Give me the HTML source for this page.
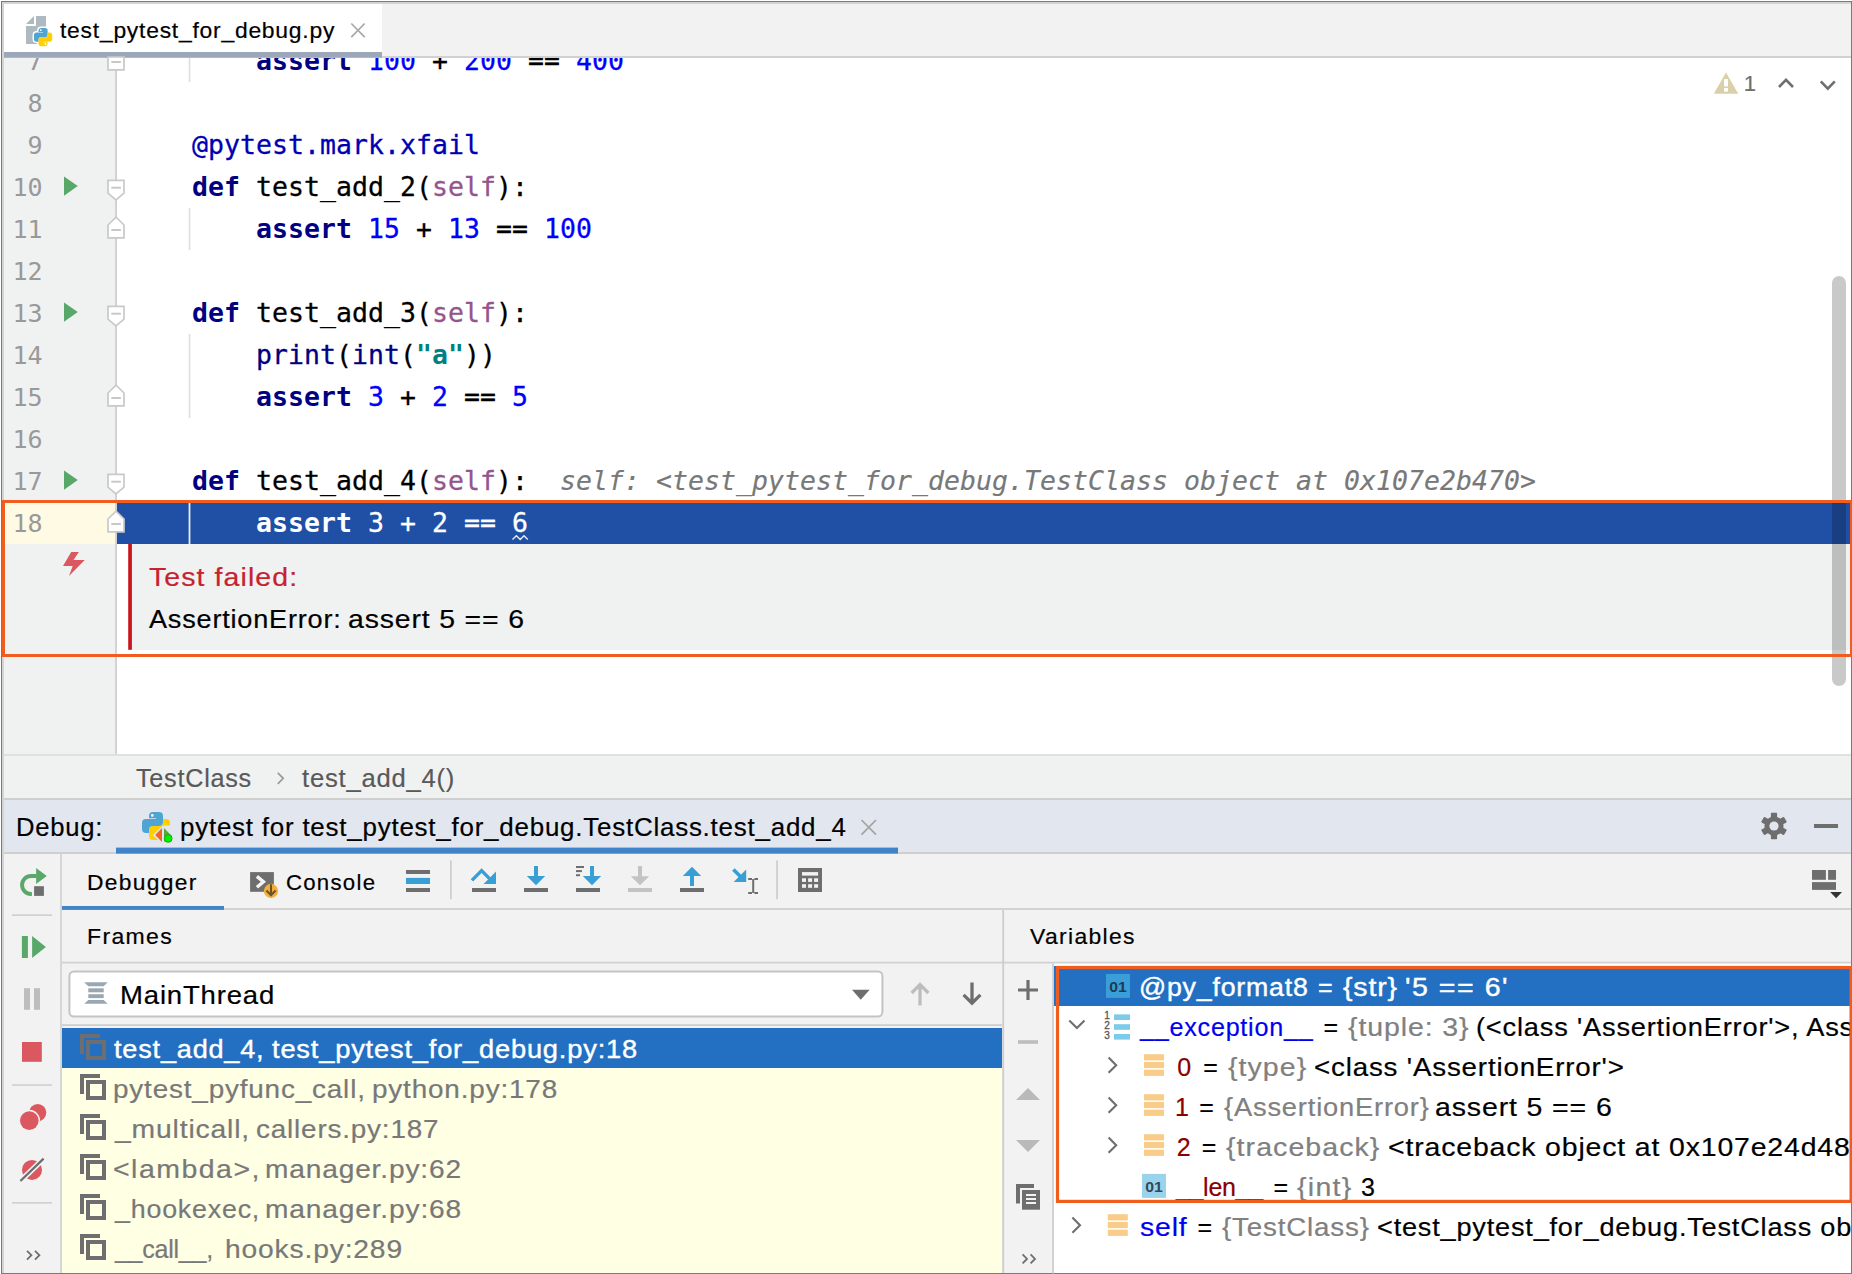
<!DOCTYPE html>
<html lang="en">
<head>
<meta charset="utf-8">
<title>PyCharm – test_pytest_for_debug.py – Debug</title>
<style>
html,body{margin:0;padding:0;background:#fff;width:1852px;height:1274px;overflow:hidden;}
#root{position:absolute;left:0;top:0;width:1852px;height:1274px;overflow:hidden;background:#fff;}
body{width:1852px;height:1274px;position:relative;overflow:hidden;font-family:"Liberation Sans","Liberation Sans",sans-serif;}
.a{position:absolute;}
.t{position:absolute;left:0;white-space:pre;line-height:1;height:1em;font-family:"Liberation Sans","Liberation Sans",sans-serif;-webkit-text-stroke:0.2px currentColor;}
.t span{position:absolute;top:0;transform-origin:0 50%;}
.t.w span{-webkit-text-stroke:0.4px #fff;}
.code{position:absolute;left:192px;white-space:pre;font-family:"DejaVu Sans Mono","Liberation Mono",monospace;font-size:26.5px;letter-spacing:0.046px;line-height:42px;height:42px;color:#000;margin-top:0px;-webkit-text-stroke:0.3px currentColor;}
.ln{position:absolute;left:4px;width:38.5px;text-align:right;white-space:pre;font-family:"DejaVu Sans Mono","Liberation Mono",monospace;font-size:25px;line-height:42px;height:42px;color:#999;margin-top:0.8px;}
.k{color:#000080;font-weight:bold;-webkit-text-stroke:0;}
.n{color:#0000ff;}
.s{color:#94558d;}
.d{color:#0000b2;}
.b{color:#000080;}
.q{color:#008080;font-weight:bold;-webkit-text-stroke:0;}
.h{color:#787878;font-style:italic;-webkit-text-stroke:0.15px currentColor;}
.sel,.sel span{color:#fff !important;}
#svg{position:absolute;left:0;top:0;width:1852px;height:1274px;pointer-events:none;}
</style>
</head>
<body>
<div id="root">
<!-- ================= EDITOR ================= -->
<div id="editor" class="a" style="left:4px;top:58px;width:1847px;height:696px;background:#fff;"></div>
<div id="gutter" class="a" style="left:4px;top:58px;width:112px;height:696px;background:#f0f2f2;"></div>
<!-- current line -->
<div class="a" style="left:4px;top:503px;width:112px;height:41px;background:#fffae3;"></div>
<div class="a" style="left:117px;top:503px;width:1734px;height:41px;background:#2050a6;"></div>
<!-- test failed inlay -->
<div id="inlay" class="a" style="left:130px;top:544px;width:1721px;height:106px;background:#f0f2f2;"></div>

<!-- line numbers -->
<div class="ln" style="top:40px">7</div>
<div class="ln" style="top:82px">8</div>
<div class="ln" style="top:124px">9</div>
<div class="ln" style="top:166px">10</div>
<div class="ln" style="top:208px">11</div>
<div class="ln" style="top:250px">12</div>
<div class="ln" style="top:292px">13</div>
<div class="ln" style="top:334px">14</div>
<div class="ln" style="top:376px">15</div>
<div class="ln" style="top:418px">16</div>
<div class="ln" style="top:460px">17</div>
<div class="ln" style="top:502px">18</div>

<!-- code -->
<div class="code" style="top:40px">    <span class="k">assert</span> <span class="n">100</span> + <span class="n">200</span> == <span class="n">400</span></div>
<div class="code" style="top:124px"><span class="d">@pytest.mark.xfail</span></div>
<div class="code" style="top:166px"><span class="k">def</span> test_add_2(<span class="s">self</span>):</div>
<div class="code" style="top:208px">    <span class="k">assert</span> <span class="n">15</span> + <span class="n">13</span> == <span class="n">100</span></div>
<div class="code" style="top:292px"><span class="k">def</span> test_add_3(<span class="s">self</span>):</div>
<div class="code" style="top:334px">    <span class="b">print</span>(<span class="b">int</span>(<span class="q">"a"</span>))</div>
<div class="code" style="top:376px">    <span class="k">assert</span> <span class="n">3</span> + <span class="n">2</span> == <span class="n">5</span></div>
<div class="code" style="top:460px"><span class="k">def</span> test_add_4(<span class="s">self</span>):  <span class="h">self: &lt;test_pytest_for_debug.TestClass object at 0x107e2b470&gt;</span></div>
<div class="code sel" style="top:502px">    <span class="k">assert</span> <span class="n">3</span> + <span class="n">2</span> == <span class="n">6</span></div>

<!-- ================= EDITOR TAB BAR ================= -->
<div id="tabbar" class="a" style="left:4px;top:4px;width:1847px;height:52px;background:#f2f2f2;border-bottom:2px solid #d1d1d1;"></div>
<div id="tab" class="a" style="left:4px;top:4px;width:378px;height:48px;background:#fff;"></div>

<!-- ================= BREADCRUMBS ================= -->
<div id="crumbs" class="a" style="left:4px;top:754px;width:1847px;height:42px;background:#f0f2f2;border-top:2px solid #e0e0e0;border-bottom:2px solid #cfcfcf;"></div>

<!-- ================= DEBUG TOOL WINDOW ================= -->
<div id="dbghdr" class="a" style="left:4px;top:800px;width:1847px;height:52px;background:#e2e6ee;border-bottom:2px solid #cfcfcf;"></div>
<div id="dbgbody" class="a" style="left:4px;top:854px;width:1847px;height:419px;background:#f2f2f2;"></div>
<!-- toolbar row bottom border -->
<!-- left strip divider -->
<!-- frames / variables headers border -->
<!-- frames / variables divider -->
<!-- thread combo -->
<div id="combo" class="a" style="left:70px;top:972px;width:812px;height:44px;background:#fff;border-radius:3px;"></div>
<!-- frames list -->
<div id="frames" class="a" style="left:62px;top:1028px;width:940px;height:245px;background:#ffffe4;"></div>
<div class="a" style="left:62px;top:1028px;width:940px;height:40px;background:#2370c2;"></div>
<!-- variables -->
<div id="vars" class="a" style="left:1054px;top:963px;width:797px;height:310px;background:#fff;"></div>
<div class="a" style="left:1054px;top:966px;width:797px;height:40px;background:#2370c2;"></div>


<div class="t" style="top:19.74px;font-size:22.4px;"><span style="left:59.8px;letter-spacing:0.75px;transform:scaleX(1.021);color:#000">test_pytest_for_debug.py</span></div>
<div class="t" style="top:565.04px;font-size:25px;"><span style="left:148.5px;letter-spacing:0.95px;transform:scaleX(1.140);color:#c7222d">Test failed:</span></div>
<div class="t" style="top:607.24px;font-size:25px;"><span style="left:148.9px;letter-spacing:0.75px;transform:scaleX(1.082);color:#000">AssertionError: </span><span style="left:347.6px;letter-spacing:0.75px;transform:scaleX(1.136);color:#000">assert 5 == 6</span></div>
<div class="t" style="top:765.54px;font-size:25px;"><span style="left:136.4px;letter-spacing:0.75px;transform:scaleX(1.007);color:#595959">TestClass</span></div>
<div class="t" style="top:765.54px;font-size:25px;"><span style="left:301.6px;letter-spacing:0.75px;transform:scaleX(1.025);color:#595959">test_add_4()</span></div>
<div class="t" style="top:815.44px;font-size:25px;"><span style="left:15.6px;letter-spacing:0.75px;transform:scaleX(1.024);color:#000">Debug:</span></div>
<div class="t" style="top:815.44px;font-size:25px;"><span style="left:179.8px;letter-spacing:0.75px;transform:scaleX(1.037);color:#000">pytest for test_pytest_for_debug.TestClass.test_add_4</span></div>
<div class="t" style="top:871.51px;font-size:22.2px;"><span style="left:87.1px;letter-spacing:1.30px;transform:scaleX(1.026);color:#000">Debugger</span></div>
<div class="t" style="top:871.81px;font-size:22.2px;"><span style="left:285.9px;letter-spacing:1.28px;color:#000">Console</span></div>
<div class="t" style="top:925.61px;font-size:22.2px;"><span style="left:87.4px;letter-spacing:1.30px;transform:scaleX(1.037);color:#000">Frames</span></div>
<div class="t" style="top:925.81px;font-size:22.2px;"><span style="left:1030.2px;letter-spacing:1.30px;transform:scaleX(1.032);color:#000">Variables</span></div>
<div class="t" style="top:983.14px;font-size:25px;"><span style="left:119.7px;letter-spacing:0.75px;transform:scaleX(1.101);color:#000">MainThread</span></div>
<div class="t w" style="top:1036.94px;font-size:25px;"><span style="left:114.1px;letter-spacing:0.75px;transform:scaleX(1.083);color:#fff">test_add_4, </span><span style="left:272.0px;letter-spacing:0.75px;transform:scaleX(1.090);color:#fff">test_pytest_for_debug.py:18</span></div>
<div class="t" style="top:1076.94px;font-size:25px;"><span style="left:112.8px;letter-spacing:0.75px;transform:scaleX(1.114);color:#787878">pytest_pyfunc_call, </span><span style="left:371.9px;letter-spacing:0.75px;transform:scaleX(1.115);color:#787878">python.py:178</span></div>
<div class="t" style="top:1116.94px;font-size:25px;"><span style="left:115.0px;letter-spacing:0.75px;transform:scaleX(1.131);color:#787878">_multicall, </span><span style="left:255.7px;letter-spacing:0.75px;transform:scaleX(1.113);color:#787878">callers.py:187</span></div>
<div class="t" style="top:1156.94px;font-size:25px;"><span style="left:113.1px;letter-spacing:1.29px;transform:scaleX(1.140);color:#787878">&lt;lambda&gt;, </span><span style="left:264.7px;letter-spacing:0.75px;transform:scaleX(1.124);color:#787878">manager.py:62</span></div>
<div class="t" style="top:1196.94px;font-size:25px;"><span style="left:115.0px;letter-spacing:0.75px;transform:scaleX(1.072);color:#787878">_hookexec, </span><span style="left:264.7px;letter-spacing:0.75px;transform:scaleX(1.125);color:#787878">manager.py:68</span></div>
<div class="t" style="top:1236.94px;font-size:25px;"><span style="left:114.9px;letter-spacing:-0.23px;color:#787878">__call__, </span><span style="left:224.6px;letter-spacing:0.75px;transform:scaleX(1.128);color:#787878">hooks.py:289</span></div>
<div class="t w" style="top:974.94px;font-size:25px;"><span style="left:1138.7px;letter-spacing:0.75px;transform:scaleX(1.069);color:#fff">@py_format8 </span><span style="left:1318.1px;letter-spacing:0.00px;color:#fff">= </span><span style="left:1343.1px;letter-spacing:0.75px;transform:scaleX(1.140);color:#fff">{str} </span><span style="left:1404.8px;letter-spacing:1.36px;transform:scaleX(1.140);color:#fff">'5 == 6'</span></div>
<div class="t" style="top:1014.94px;font-size:25px;"><span style="left:1140.3px;letter-spacing:0.75px;transform:scaleX(1.006);color:#0000f0">__exception__ </span><span style="left:1323.5px;letter-spacing:0.00px;color:#000">= </span><span style="left:1348.3px;letter-spacing:0.78px;transform:scaleX(1.140);color:#808080">{tuple: 3} </span><span style="left:1476.2px;letter-spacing:0.75px;transform:scaleX(1.088);color:#000">(&lt;class 'AssertionError'&gt;, AssertionError</span></div>
<div class="t" style="top:1054.94px;font-size:25px;"><span style="left:1177.3px;letter-spacing:0.00px;color:#8b0000">0 </span><span style="left:1203.3px;letter-spacing:0.00px;color:#000">= </span><span style="left:1227.9px;letter-spacing:0.92px;transform:scaleX(1.140);color:#808080">{type} </span><span style="left:1313.6px;letter-spacing:0.75px;transform:scaleX(1.108);color:#000">&lt;class 'AssertionError'&gt;</span></div>
<div class="t" style="top:1094.94px;font-size:25px;"><span style="left:1174.9px;letter-spacing:0.00px;color:#8b0000">1 </span><span style="left:1199.2px;letter-spacing:0.00px;color:#000">= </span><span style="left:1223.5px;letter-spacing:0.75px;transform:scaleX(1.091);color:#808080">{AssertionError} </span><span style="left:1435.3px;letter-spacing:0.76px;transform:scaleX(1.140);color:#000">assert 5 == 6</span></div>
<div class="t" style="top:1134.94px;font-size:25px;"><span style="left:1176.8px;letter-spacing:0.00px;color:#8b0000">2 </span><span style="left:1201.8px;letter-spacing:0.00px;color:#000">= </span><span style="left:1226.2px;letter-spacing:0.94px;transform:scaleX(1.140);color:#808080">{traceback} </span><span style="left:1387.5px;letter-spacing:0.75px;transform:scaleX(1.137);color:#000">&lt;traceback object at 0x107e24d48&gt;</span></div>
<div class="t" style="top:1174.94px;font-size:25px;"><span style="left:1175.9px;letter-spacing:-0.29px;color:#8b0000">__len__ </span><span style="left:1273.6px;letter-spacing:0.00px;color:#000">= </span><span style="left:1297.2px;letter-spacing:1.13px;transform:scaleX(1.140);color:#808080">{int} </span><span style="left:1360.9px;letter-spacing:0.00px;color:#000">3</span></div>
<div class="t" style="top:1214.94px;font-size:25px;"><span style="left:1139.7px;letter-spacing:0.75px;transform:scaleX(1.136);color:#0000f0">self </span><span style="left:1197.6px;letter-spacing:0.00px;color:#000">= </span><span style="left:1221.9px;letter-spacing:0.75px;transform:scaleX(1.108);color:#808080">{TestClass} </span><span style="left:1376.9px;letter-spacing:0.75px;transform:scaleX(1.084);color:#000">&lt;test_pytest_for_debug.TestClass object at 0x107e2b470&gt;</span></div>
<div class="t" style="top:73.4px;font-size:22px;"><span style="left:1743.8px;color:#6e6e6e">1</span></div>

<!-- window frame -->
<div class="a" style="left:1px;top:1px;width:1851px;height:1px;background:#7a7a7a;"></div>
<div class="a" style="left:2px;top:2px;width:1849px;height:2px;background:#d4d4d4;"></div>
<div class="a" style="left:1px;top:1px;width:1.2px;height:1273px;background:#7a7a7a;"></div>
<div class="a" style="left:2.2px;top:2px;width:1.8px;height:1271px;background:#d4d4d4;"></div>
<div class="a" style="left:1850.8px;top:1px;width:1.2px;height:1273px;background:#7a7a7a;"></div>
<div class="a" style="left:1px;top:1272.5px;width:1851px;height:1.5px;background:#7a7a7a;"></div>

<!-- ================= ICONS / LINES ================= -->
<svg id="svg" viewBox="0 0 1852 1274" width="1852" height="1274">
<!-- ===== separator lines (sub-pixel) ===== -->
<g id="lines">
  <rect x="4" y="52" width="378" height="5.6" fill="#9ca8ba"/>
  <rect x="115.2" y="58" width="1.7" height="696" fill="#cdcdcd"/>
  <rect x="128.2" y="544" width="3.7" height="105.8" fill="#c9161d"/>
  <rect x="116" y="847.6" width="782" height="6" fill="#4083c9"/>
  <rect x="62" y="908" width="1789" height="1.9" fill="#d1d1d1"/>
  <rect x="62" y="906" width="162" height="3.9" fill="#4083c9"/>
  <rect x="60.2" y="854" width="1.7" height="419" fill="#d1d1d1"/>
  <rect x="12" y="914.3" width="40" height="1.7" fill="#d1d1d1"/>
  <rect x="12" y="1084.2" width="40" height="1.7" fill="#d1d1d1"/>
  <rect x="12" y="1202" width="40" height="1.7" fill="#d1d1d1"/>
  <rect x="62" y="961.7" width="1789" height="1.8" fill="#d1d1d1"/>
  <rect x="1002.3" y="910" width="1.8" height="363" fill="#cdcdcd"/>
  <rect x="62" y="1024.2" width="940" height="1.8" fill="#cfcfcf"/>
  <rect x="1052.2" y="963.5" width="1.7" height="310" fill="#cdcdcd"/>
  <rect x="69.4" y="971.5" width="813" height="45" rx="4.5" ry="4.5" fill="none" stroke="#c4c4c4" stroke-width="2"/>
</g>
<!-- ===== editor tab: python file icon ===== -->
<g id="ic-pyfile">
  <path d="M34 16 L26 24 H34 Z" fill="#aeb9c0"/>
  <path d="M36 16 H46 V44 H26 V26 H36 Z" fill="#aeb9c0"/>
  <g transform="translate(34,28) scale(0.65)">
    <path d="M7,4 Q7,0 11,0 H17 Q21,0 21,4 V10 Q21,14 17,14 H11 Q7,14 7,18 V21 H4 Q0,21 0,17 V11 Q0,7 4,7 H14 V6.2 H7 Z" fill="#fff" stroke="#fff" stroke-width="4.5" stroke-linejoin="round"/>
    <path transform="rotate(180 14 14)" d="M7,4 Q7,0 11,0 H17 Q21,0 21,4 V10 Q21,14 17,14 H11 Q7,14 7,18 V21 H4 Q0,21 0,17 V11 Q0,7 4,7 H14 V6.2 H7 Z" fill="#fff" stroke="#fff" stroke-width="4.5" stroke-linejoin="round"/>
    <path d="M7,4 Q7,0 11,0 H17 Q21,0 21,4 V10 Q21,14 17,14 H11 Q7,14 7,18 V21 H4 Q0,21 0,17 V11 Q0,7 4,7 H14 V6.2 H7 Z" fill="#4ea5d4"/>
    <path transform="rotate(180 14 14)" d="M7,4 Q7,0 11,0 H17 Q21,0 21,4 V10 Q21,14 17,14 H11 Q7,14 7,18 V21 H4 Q0,21 0,17 V11 Q0,7 4,7 H14 V6.2 H7 Z" fill="#ffcf00"/>
    <circle cx="10.3" cy="3.4" r="1.4" fill="#fff"/>
    <circle cx="17.7" cy="24.6" r="1.4" fill="#fff"/>
  </g>
</g>
<!-- tab close -->
<path d="M351.3 23.5 L364.7 37.2 M364.7 23.5 L351.3 37.2" stroke="#a8a8a8" stroke-width="1.7" fill="none"/>

<!-- ===== inspections widget ===== -->
<g id="ic-warn">
  <path d="M1726 72.4 L1738.2 93.8 H1713.8 Z" fill="#d9cfa8"/>
  <rect x="1724" y="79" width="4" height="7.4" fill="#fff"/>
  <rect x="1724" y="88" width="4" height="3.6" fill="#fff"/>
  <path d="M1779 87 L1786 79.8 L1793 87" stroke="#6e6e6e" stroke-width="2.6" fill="none"/>
  <path d="M1820.8 81.4 L1827.8 88.6 L1834.8 81.4" stroke="#6e6e6e" stroke-width="2.6" fill="none"/>
</g>

<!-- ===== editor scrollbar ===== -->
<rect x="1832" y="276" width="14" height="410" rx="7" ry="7" fill="#000" fill-opacity="0.21"/>

<!-- ===== indent guides ===== -->
<g stroke="#dedede" stroke-width="1.6">
  <path d="M189.5 58 V82"/>
  <path d="M189.5 208 V250"/>
  <path d="M189.5 334 V418"/>
</g>
<path d="M189.5 503 V544" stroke="#e8ecf5" stroke-width="1.8"/>

<!-- ===== gutter: run icons ===== -->
<g fill="#59a869">
  <path d="M64 176.4 V195.8 L77.8 186.1 Z"/>
  <path d="M64 302.4 V321.8 L77.8 312.1 Z"/>
  <path d="M64 470.4 V489.8 L77.8 480.1 Z"/>
</g>
<!-- ===== gutter: fold markers ===== -->
<g fill="#fff" stroke="#c9c9c9" stroke-width="1.7">
  <path d="M108 69.8 H124 V57 H108 Z"/>
  <path d="M108 237.8 H124 V225 L116 217.2 L108 225 Z"/>
  <path d="M108 405.8 H124 V393 L116 385.2 L108 393 Z"/>
  <path d="M108 531.8 H124 V519 L116 511.2 L108 519 Z"/>
  <path d="M108 180.4 H124 V193.2 L116 199.8 L108 193.2 Z"/>
  <path d="M108 306.4 H124 V319.2 L116 325.8 L108 319.2 Z"/>
  <path d="M108 474.4 H124 V487.2 L116 493.8 L108 487.2 Z"/>
</g>
<g stroke="#c6c6c6" stroke-width="1.9">
  <path d="M111.3 62 H120.9"/>
  <path d="M111.3 230 H120.9"/>
  <path d="M111.3 398 H120.9"/>
  <path d="M111.3 524 H120.9"/>
  <path d="M111.3 187.7 H120.9"/>
  <path d="M111.3 313.7 H120.9"/>
  <path d="M111.3 481.7 H120.9"/>
</g>
<!-- lightning -->
<path d="M71.2 552 H78.9 L73.5 560 H84.8 L69 575.9 L72.7 565.9 H63 Z" fill="#db5860"/>
<!-- squiggle under 6 -->
<path d="M512.5 539.6 L516.4 535.8 L520.2 539.6 L524 535.8 L527.8 539.6" stroke="#e9e9e9" stroke-width="1.4" fill="none"/>

<!-- breadcrumb chevron -->
<path d="M277.8 772.8 L283.2 778.3 L277.8 783.8" stroke="#9a9a9a" stroke-width="1.7" fill="none"/>

<!-- ===== debug header: pytest icon ===== -->
<g id="ic-pytest">
  <g transform="translate(142,812)">
    <path transform="rotate(180 14 14)" d="M7,4 Q7,0 11,0 H17 Q21,0 21,4 V10 Q21,14 17,14 H11 Q7,14 7,18 V21 H4 Q0,21 0,17 V11 Q0,7 4,7 H14 V6.2 H7 Z" fill="#ffcf00"/>
    <path d="M7,4 Q7,0 11,0 H17 Q21,0 21,4 V10 Q21,14 17,14 H11 Q7,14 7,18 V21 H4 Q0,21 0,17 V11 Q0,7 4,7 H14 V6.2 H7 Z" fill="#4ea5d4"/>
    <circle cx="10.3" cy="3.4" r="1.3" fill="#fff"/>
  </g>
  <path d="M163 825.5 L152.6 835 L163 844.5 H172 V825.5 Z" fill="#e2e6ee"/>
  <path d="M155.2 835 L162 828 V842 Z" fill="#f26522"/>
  <path d="M164 828 V842 L170.8 835 Z" fill="#59a83a"/>
  <circle cx="168.2" cy="838.4" r="3.9" fill="#00f000" stroke="#1f9a1f" stroke-width="0.9"/>
</g>
<path d="M861.5 820 L876 834.7 M876 820 L861.5 834.7" stroke="#a3a3a3" stroke-width="1.7" fill="none"/>
<!-- gear -->
<g id="ic-gear" transform="translate(1774,826)">
  <g fill="#6e6e6e">
    <rect x="-3.1" y="-13.2" width="6.2" height="26.4" rx="0.8"/>
    <rect x="-3.1" y="-13.2" width="6.2" height="26.4" rx="0.8" transform="rotate(60)"/>
    <rect x="-3.1" y="-13.2" width="6.2" height="26.4" rx="0.8" transform="rotate(120)"/>
    <circle r="9.6"/>
  </g>
  <circle r="4.6" fill="#e2e6ee"/>
</g>
<rect x="1814" y="824" width="24" height="4" fill="#6e6e6e"/>

<!-- ===== debugger toolbar ===== -->
<!-- rerun -->
<g id="ic-rerun">
  <path d="M36.5 876.05 H31 A8.96 8.96 0 0 0 31 893.97 H31.9" fill="none" stroke="#59a869" stroke-width="3.9"/>
  <path d="M36.1 868 V884 L46.8 876.05 Z" fill="#59a869"/>
  <rect x="34.1" y="886.2" width="9.8" height="9.7" fill="#6e6e6e"/>
</g>
<!-- console -->
<g id="ic-console">
  <rect x="250.1" y="872.1" width="23.8" height="19.7" fill="#6e6e6e"/>
  <path d="M256.9 876.4 L263.4 881.8 L256.9 887.2" stroke="#f4f4f4" stroke-width="3.4" fill="none"/>
  <circle cx="271" cy="890.9" r="7.1" fill="#f4af3d"/>
  <path d="M271 884.2 V895 M266.4 890.6 L271 895.2 L275.6 890.6" stroke="#6b5425" stroke-width="2.1" fill="none"/>
</g>
<!-- threads -->
<rect x="406" y="870" width="24" height="4" fill="#6e6e6e"/>
<rect x="406" y="877.9" width="24" height="6.1" fill="#389fd6"/>
<rect x="406" y="888" width="24" height="4" fill="#6e6e6e"/>
<rect x="450" y="860.4" width="1.7" height="38.8" fill="#cdcdcd"/>
<!-- step over -->
<g id="ic-stepover">
  <rect x="472" y="888" width="24" height="4" fill="#6e6e6e"/>
  <path d="M471.9 880.4 L481.6 870.6 L489.5 878.6" stroke="#389fd6" stroke-width="3.4" fill="none"/>
  <path d="M496 871.6 V884 H483.6 Z" fill="#389fd6"/>
</g>
<!-- step into -->
<g id="ic-stepinto">
  <rect x="524" y="888" width="24" height="4" fill="#6e6e6e"/>
  <path d="M534 866 H538 V876 H545.2 L536 885.2 L526.8 876 H534 Z" fill="#389fd6"/>
</g>
<!-- step into my code -->
<g id="ic-stepmy">
  <rect x="576" y="888" width="24" height="4" fill="#6e6e6e"/>
  <path d="M590 866 H594 V876 H601.2 L592 885.2 L582.8 876 H590 Z" fill="#389fd6"/>
  <rect x="576" y="866" width="8" height="2" fill="#6e6e6e"/>
  <rect x="576" y="870.1" width="5.9" height="2" fill="#6e6e6e"/>
  <rect x="576" y="874.2" width="4" height="2" fill="#6e6e6e"/>
</g>
<!-- force step into (disabled) -->
<g id="ic-force" fill="#c3c3c3">
  <rect x="628" y="888" width="24" height="4"/>
  <path d="M638 866 H642 V876.2 H649.2 L640 885.2 L630.8 876.2 H638 Z"/>
</g>
<!-- step out -->
<g id="ic-stepout">
  <rect x="680" y="888" width="24" height="4" fill="#6e6e6e"/>
  <path d="M690 886 H694 V876 H701.2 L692 866.8 L682.8 876 H690 Z" fill="#389fd6"/>
</g>
<!-- run to cursor -->
<g id="ic-runtocursor">
  <path d="M733.4 869.4 L741.4 877.4" stroke="#389fd6" stroke-width="3.6" fill="none"/>
  <path d="M746.2 869.4 V881.9 H733.6 Z" fill="#389fd6"/>
  <path d="M753.2 879 V893 M748.2 878.9 H752 M754.4 878.9 H758 M748.2 893 H752 M754.4 893 H758" stroke="#6e6e6e" stroke-width="2" fill="none"/>
</g>
<rect x="776.2" y="860.4" width="1.7" height="38.8" fill="#cdcdcd"/>
<!-- evaluate (calculator) -->
<g id="ic-calc">
  <rect x="798" y="868" width="24" height="24" fill="#6e6e6e"/>
  <g fill="#f2f2f2">
    <rect x="802" y="872.1" width="16.1" height="3.5"/>
    <rect x="802" y="878.3" width="4" height="3.6"/><rect x="808.1" y="878.3" width="4" height="3.6"/><rect x="814.1" y="878.3" width="4" height="3.6"/>
    <rect x="802" y="884.2" width="4" height="3.6"/><rect x="808.1" y="884.2" width="4" height="3.6"/><rect x="814.1" y="884.2" width="4" height="3.6"/>
  </g>
</g>
<!-- layout -->
<g id="ic-layout">
  <rect x="1812" y="870" width="13.9" height="9.8" fill="#6e6e6e"/>
  <rect x="1828.1" y="870" width="7.9" height="9.8" fill="#6e6e6e"/>
  <rect x="1812" y="882.1" width="24" height="7.8" fill="#6e6e6e"/>
  <path d="M1830.2 892 H1842 L1836.1 898.2 Z" fill="#333"/>
</g>

<!-- ===== left strip ===== -->
<g id="ic-resume" fill="#59a869">
  <rect x="21.9" y="936" width="6" height="22"/>
  <path d="M32.1 936 V958 L45.9 947 Z"/>
</g>
<g id="ic-pause" fill="#bdbdbd">
  <rect x="24" y="988.2" width="6" height="21.6"/>
  <rect x="34" y="988.2" width="6" height="21.6"/>
</g>
<rect x="22" y="1042" width="19.8" height="19.8" fill="#db5860"/>
<g id="ic-breakpoints">
  <circle cx="37.7" cy="1112.6" r="8.6" fill="#db5860"/>
  <circle cx="29.3" cy="1120.6" r="10.8" fill="#f2f2f2"/>
  <circle cx="29.3" cy="1120.6" r="9.3" fill="#db5860"/>
</g>
<g id="ic-mute">
  <circle cx="32" cy="1169.9" r="10" fill="#db5860"/>
  <path d="M20.4 1181 L43.6 1158.7" stroke="#f2f2f2" stroke-width="5.4"/>
  <path d="M20.4 1181 L43.6 1158.7" stroke="#6e6e6e" stroke-width="2.3"/>
</g>
<path d="M27 1250.8 L31.4 1255.2 L27 1259.6 M35 1250.8 L39.4 1255.2 L35 1259.6" stroke="#6e6e6e" stroke-width="1.8" fill="none"/>

<!-- ===== frames panel ===== -->
<g id="ic-thread" fill="#9aa7b0">
  <path d="M84.2 982.3 H107.7 L103.7 986.3 H88.3 Z"/>
  <rect x="88.3" y="988.3" width="15.4" height="4"/>
  <rect x="88.3" y="994.2" width="15.4" height="3.9"/>
  <path d="M88.3 1000 H103.7 L107.7 1003.8 H84.2 Z"/>
</g>
<path d="M852 989.8 H869.6 L860.8 999.8 Z" fill="#6e6e6e"/>
<path d="M920 1005.4 V984.4 M911.6 993 L920 984.6 L928.4 993" stroke="#bdbdbd" stroke-width="3.3" fill="none"/>
<path d="M972 982.4 V1003.4 M963.6 994.8 L972 1003.2 L980.4 994.8" stroke="#6e6e6e" stroke-width="3.3" fill="none"/>
<path d="M80 1054 V1034 H100 V1038 H84 V1054 Z" fill="#6e6e6e"/>
<rect x="88" y="1042" width="16" height="16" fill="none" stroke="#6e6e6e" stroke-width="4"/>
<path d="M80 1094 V1074 H100 V1078 H84 V1094 Z" fill="#6e6e6e"/>
<rect x="88" y="1082" width="16" height="16" fill="none" stroke="#6e6e6e" stroke-width="4"/>
<path d="M80 1134 V1114 H100 V1118 H84 V1134 Z" fill="#6e6e6e"/>
<rect x="88" y="1122" width="16" height="16" fill="none" stroke="#6e6e6e" stroke-width="4"/>
<path d="M80 1174 V1154 H100 V1158 H84 V1174 Z" fill="#6e6e6e"/>
<rect x="88" y="1162" width="16" height="16" fill="none" stroke="#6e6e6e" stroke-width="4"/>
<path d="M80 1214 V1194 H100 V1198 H84 V1214 Z" fill="#6e6e6e"/>
<rect x="88" y="1202" width="16" height="16" fill="none" stroke="#6e6e6e" stroke-width="4"/>
<path d="M80 1254 V1234 H100 V1238 H84 V1254 Z" fill="#6e6e6e"/>
<rect x="88" y="1242" width="16" height="16" fill="none" stroke="#6e6e6e" stroke-width="4"/>

<!-- ===== variables toolbar ===== -->
<path d="M1028 980 V1000 M1018 990 H1038" stroke="#6e6e6e" stroke-width="3.2" fill="none"/>
<path d="M1018 1042 H1038" stroke="#bdbdbd" stroke-width="3.6" fill="none"/>
<path d="M1016 1100 L1028 1088 L1040 1100 Z" fill="#b9b9b9"/>
<path d="M1016 1140 L1028 1152 L1040 1140 Z" fill="#b9b9b9"/>
<g id="ic-copy" fill="#6e6e6e">
  <path d="M1016 1184 H1034 V1188 H1020 V1203.6 H1016 Z"/>
  <rect x="1022" y="1190" width="18" height="19.7"/>
  <g fill="#f2f2f2"><rect x="1026" y="1194" width="10" height="2"/><rect x="1026" y="1198" width="10" height="2"/><rect x="1026" y="1202" width="10" height="2"/></g>
</g>
<path d="M1022.6 1254.4 L1027 1258.9 L1022.6 1263.4 M1030.6 1254.4 L1035 1258.9 L1030.6 1263.4" stroke="#6e6e6e" stroke-width="1.8" fill="none"/>

<!-- ===== variables tree icons ===== -->
<rect x="1106" y="973.9" width="24" height="24" fill="#3a9fd8"/>
<text x="1109.2" y="991.6" font-family="Liberation Sans, Arial, sans-serif" font-size="15.5" font-weight="bold" fill="#1d3b55" textLength="17.6" lengthAdjust="spacingAndGlyphs">01</text>
<rect x="1142" y="1173.9" width="24" height="24" fill="#9ad4ec"/>
<text x="1145.2" y="1191.6" font-family="Liberation Sans, Arial, sans-serif" font-size="15.5" font-weight="bold" fill="#33475a" textLength="17.6" lengthAdjust="spacingAndGlyphs">01</text>
<rect x="1114" y="1014.4" width="16" height="5.6" fill="#7ccbe8"/>
<text x="1104.2" y="1019.2" font-family="Liberation Sans, Arial, sans-serif" font-size="10" fill="#555" stroke="#555" stroke-width="0.3">1</text>
<rect x="1114" y="1024.2" width="16" height="5.6" fill="#7ccbe8"/>
<text x="1104.2" y="1029.1" font-family="Liberation Sans, Arial, sans-serif" font-size="10" fill="#555" stroke="#555" stroke-width="0.3">2</text>
<rect x="1114" y="1034" width="16" height="5.6" fill="#7ccbe8"/>
<text x="1104.2" y="1039" font-family="Liberation Sans, Arial, sans-serif" font-size="10" fill="#555" stroke="#555" stroke-width="0.3">3</text>
<rect x="1144" y="1054.2" width="20" height="6.2" fill="#f9cd89"/>
<rect x="1144" y="1061.95" width="20" height="6.2" fill="#f9cd89"/>
<rect x="1144" y="1069.7" width="20" height="6.2" fill="#f9cd89"/>
<rect x="1144" y="1094.2" width="20" height="6.2" fill="#f9cd89"/>
<rect x="1144" y="1101.95" width="20" height="6.2" fill="#f9cd89"/>
<rect x="1144" y="1109.7" width="20" height="6.2" fill="#f9cd89"/>
<rect x="1144" y="1134.2" width="20" height="6.2" fill="#f9cd89"/>
<rect x="1144" y="1141.95" width="20" height="6.2" fill="#f9cd89"/>
<rect x="1144" y="1149.7" width="20" height="6.2" fill="#f9cd89"/>
<rect x="1107.8" y="1214.2" width="20" height="6.2" fill="#f9cd89"/>
<rect x="1107.8" y="1221.95" width="20" height="6.2" fill="#f9cd89"/>
<rect x="1107.8" y="1229.7" width="20" height="6.2" fill="#f9cd89"/>
<path d="M1108.6 1057.6 l7.6 7.6 l-7.6 7.6" fill="none" stroke="#6e6e6e" stroke-width="2.1"/>
<path d="M1108.6 1097.6 l7.6 7.6 l-7.6 7.6" fill="none" stroke="#6e6e6e" stroke-width="2.1"/>
<path d="M1108.6 1137.6 l7.6 7.6 l-7.6 7.6" fill="none" stroke="#6e6e6e" stroke-width="2.1"/>
<path d="M1072.4 1217.6 l7.6 7.6 l-7.6 7.6" fill="none" stroke="#6e6e6e" stroke-width="2.1"/>
<path d="M1069.3 1020.4 l7.6 7.6 l7.6 -7.6" fill="none" stroke="#6e6e6e" stroke-width="2.1"/>

<!-- ===== orange callout frames ===== -->
<rect x="3.5" y="501.5" width="1848" height="154" fill="none" stroke="#f05d1e" stroke-width="3"/>
<rect x="1057.5" y="967.5" width="793.6" height="233.9" fill="none" stroke="#f05d1e" stroke-width="3.2"/>

</svg>

</div>
</body>
</html>
